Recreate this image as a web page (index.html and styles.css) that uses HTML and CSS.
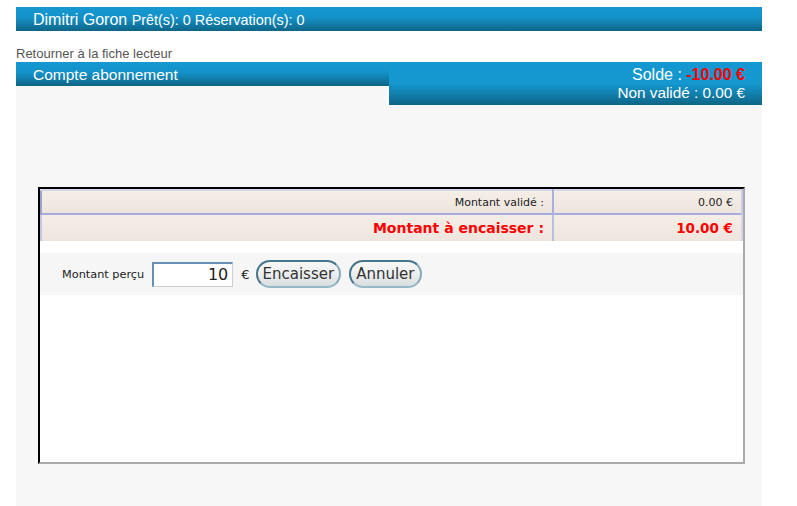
FILE: index.html
```html
<!DOCTYPE html>
<html lang="fr">
<head>
<meta charset="utf-8">
<title>Compte abonnement</title>
<link rel="stylesheet" href="styles.css">
</head>
<body>
<div class="page">
  <div class="topbar"><span class="name">Dimitri Goron</span> <span class="counts">Prêt(s): 0 Réservation(s): 0</span></div>
  <a class="back" href="#">Retourner à la fiche lecteur</a>
  <div class="panel">
    <div class="panel-head">
      <div class="panel-title">Compte abonnement</div>
      <div class="panel-balance">
        <div class="bal-1">Solde : <span class="neg">-10.00 €</span></div>
        <div class="bal-2">Non validé : 0.00 €</div>
      </div>
    </div>
    <div class="dialog">
      <table class="sums">
        <tr class="r1">
          <td class="lbl">Montant validé :</td>
          <td class="val">0.00 €</td>
        </tr>
        <tr class="r2">
          <td class="lbl">Montant à encaisser :</td>
          <td class="val">10.00 €</td>
        </tr>
      </table>
      <div class="form-row">
        <label class="form-label" for="m">Montant perçu</label>
        <input class="amount" id="m" type="text" value="10">
        <span class="cur">€</span>
        <button class="btn">Encaisser</button>
        <button class="btn">Annuler</button>
      </div>
    </div>
  </div>
</div>
</body>
</html>
```
FILE: styles.css
```css
html, body {
  margin: 0;
  padding: 0;
  background: #ffffff;
}
.page {
  width: 746px;
  margin-left: 16px;
  padding-top: 7px;
  font-family: "Liberation Sans", Arial, sans-serif;
}
.topbar {
  height: 24px;
  box-sizing: border-box;
  padding-left: 17px;
  line-height: 26px;
  color: #ffffff;
  background: linear-gradient(#1598d1 0%, #1491c8 45%, #0e6586 100%);
  white-space: nowrap;
}
.topbar .name { font-size: 16px; }
.topbar .counts { font-size: 14.4px; }
.back {
  display: block;
  margin-top: 15px;
  height: 16px;
  line-height: 16px;
  font-size: 13px;
  color: #555555;
  text-decoration: none;
}
.panel {
  background: #f7f7f7;
  padding-bottom: 60px;
}
.panel-head {
  display: flex;
  align-items: flex-start;
}
.panel-title {
  flex: 0 0 373px;
  height: 24px;
  box-sizing: border-box;
  padding-left: 17px;
  line-height: 25px;
  font-size: 15.5px;
  color: #ffffff;
  background: linear-gradient(#1598d1 0%, #1491c8 45%, #0e6586 100%);
}
.panel-balance {
  flex: 1;
  height: 43px;
  box-sizing: border-box;
  padding: 4px 17px 0 0;
  text-align: right;
  line-height: 18px;
  color: #ffffff;
  background: linear-gradient(#1598d1 0%, #1597cf 50%, #0e6586 100%);
}
.bal-1 { font-size: 16px; }
.bal-2 { font-size: 15.3px; }
.neg {
  color: #ff0000;
  font-weight: bold;
}
.dialog {
  margin: 82px 17px 0 22px;
  height: 277px;
  box-sizing: border-box;
  background: #ffffff;
  border-top: 2px solid #000000;
  border-left: 2px solid #000000;
  border-right: 2px solid #aaaaaa;
  border-bottom: 2px solid #aaaaaa;
  font-family: "DejaVu Sans", sans-serif;
}
.sums {
  width: 100%;
  border-collapse: collapse;
  border-spacing: 0;
}
.sums td {
  background: linear-gradient(#f5eee7, #ede5de);
  text-align: right;
  padding: 0 8px 0 0;
}
.sums .lbl {
  border-left: 2px solid #9aa1d2;
  border-right: 2px solid #a9b0dd;
}
.sums .val {
  width: 179px;
  border-right: 2px solid #c9cce8;
}
.r1 td {
  height: 22px;
  border-top: 2px solid #d6d7ec;
  font-size: 11px;
  color: #222222;
}
.r2 td {
  height: 26px;
  border-top: 2px solid #a5acdd;
  font-size: 14px;
  font-weight: bold;
  color: #ff0000;
}
.r2 .val { font-size: 13.5px; }
.r2 .lbl { border-left-color: #c3c7e6; border-right-color: #b7bde3; }
.r2 .val { border-right-color: #d3d5ec; }
.form-row {
  margin-top: 12px;
  height: 42px;
  box-sizing: border-box;
  padding-left: 22px;
  display: flex;
  align-items: center;
  gap: 8px;
  background: #f6f6f6;
}
.form-label {
  font-size: 11.3px;
  color: #222222;
}
.amount {
  width: 81px;
  height: 25px;
  box-sizing: border-box;
  margin: 0;
  padding: 0 4px 0 0;
  text-align: right;
  font-family: "DejaVu Sans", sans-serif;
  font-size: 16px;
  color: #222222;
  background: #ffffff;
  border-top: 2px solid #6690b4;
  border-left: 2px solid #6690b4;
  border-right: 1px solid #c9cfd5;
  border-bottom: 1px solid #c9cfd5;
}
.cur {
  font-size: 13px;
  color: #222222;
  margin-right: -2px;
}
.btn {
  height: 28px;
  margin: 0;
  padding: 0 5px;
  font-family: "DejaVu Sans", sans-serif;
  font-size: 15px;
  color: #333333;
  border-radius: 14px;
  border-top: 2px solid #46758c;
  border-left: 2px solid #46758c;
  border-right: 2px solid #86a8b9;
  border-bottom: 2px solid #97b8c8;
  background: linear-gradient(#f7f7f7 0%, #eceeef 50%, #d8dee0 100%);
}
```
